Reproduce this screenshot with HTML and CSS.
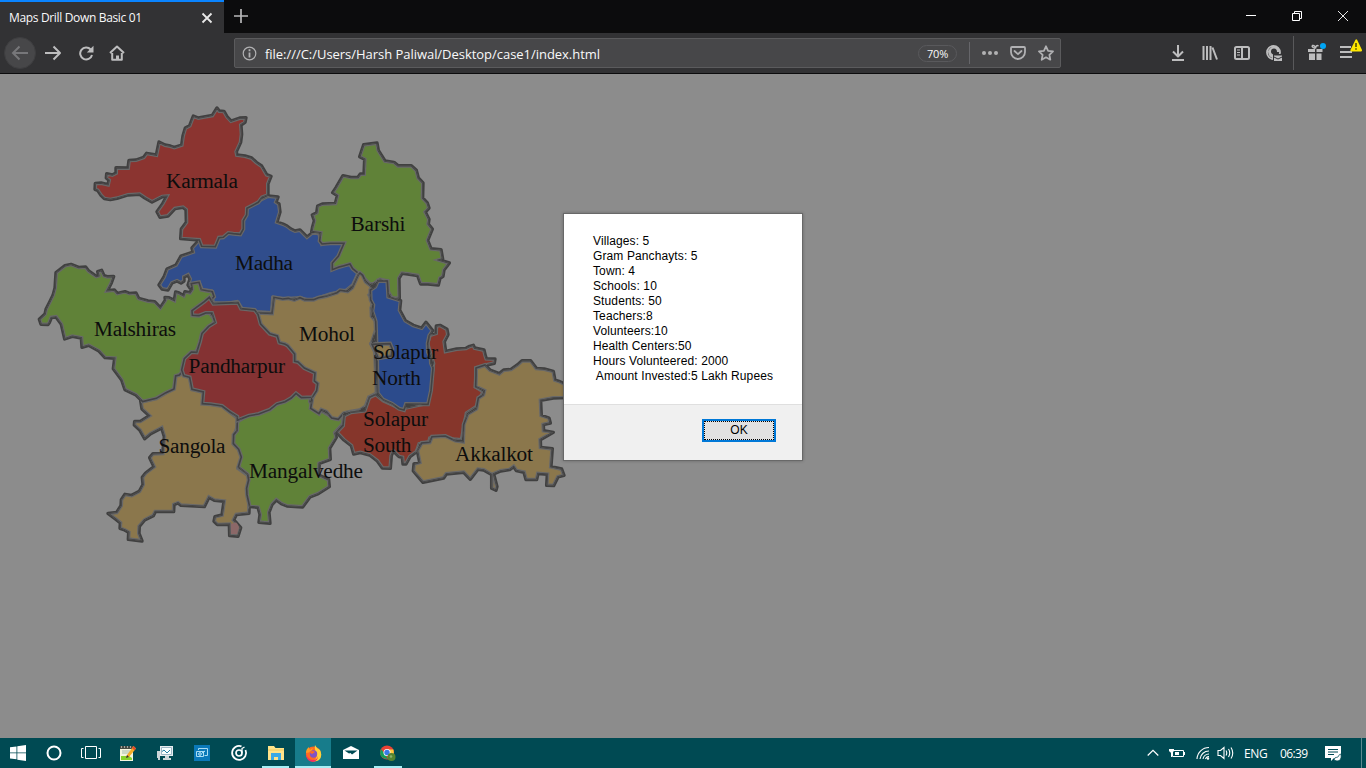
FILE: index.html
```html
<!DOCTYPE html>
<html lang="en">
<head>
<meta charset="utf-8">
<title>Maps Drill Down Basic 01</title>
<link rel="stylesheet" href="styles.css">
</head>
<body>
<div class="screen">
  <header class="tabbar">
    <div class="tab"><span class="tab-title">Maps Drill Down Basic 01</span>
      <svg class="tab-close" width="12" height="12" viewBox="0 0 12 12"><path d="M1.500 1.500l9 9M10.500 1.500l-9 9" stroke="#e8e8e8" stroke-width="1.800"/></svg>
    </div>
    <svg class="newtab" width="16" height="16" viewBox="0 0 16 16"><path d="M8 1v14M1 8h14" stroke="#b8b8b9" stroke-width="1.700"/></svg>
    <div class="wincontrols">
      <svg width="12" height="12" viewBox="0 0 12 12"><path d="M1 5.500h10" stroke="#fff"/></svg>
      <svg width="12" height="12" viewBox="0 0 12 12" fill="none" stroke="#fff"><path d="M1.500 3.500h7v7h-7zM3.500 3.500v-2h7v7h-2"/></svg>
      <svg width="12" height="12" viewBox="0 0 12 12"><path d="M1 1l10 10M11 1L1 11" stroke="#fff" stroke-width=".9"/></svg>
    </div>
  </header>

  <nav class="toolbar">
    <div class="navbuttons">
      <span class="back"><svg width="18" height="16" viewBox="0 0 18 16"><path d="M17 8H2M8.500 1.500L2 8l6.500 6.500" class="dim"/></svg></span>
      <svg width="18" height="16" viewBox="0 0 18 16"><path d="M1 8h14.500M9.500 1.500L16 8l-6.500 6.500" class="ic"/></svg>
      <svg width="16" height="16" viewBox="0 0 16 16"><path d="M12.700 4.500A6 6 0 1 0 14 10" class="ic"/><path d="M15.500.8v6.700H8.800z" fill="#bdbdbe"/></svg>
      <svg width="16" height="16" viewBox="0 0 16 16"><path d="M1 8l7-6.500L15 8M3.200 8v6.800h9.600V8" class="ic"/><path d="M7 15v-4.500h3V15" fill="#bdbdbe"/></svg>
    </div>
    <div class="urlbar">
      <svg width="15" height="15" viewBox="0 0 15 15"><circle cx="7.500" cy="7.500" r="6.300" fill="none" stroke="#b1b1b3" stroke-width="1.200"/><path d="M7.500 6.500v5M7.500 3.200v2" stroke="#b1b1b3" stroke-width="1.800"/></svg>
      <span class="url">file:///C:/Users/Harsh Paliwal/Desktop/case1/index.html</span>
      <span class="zoomlevel">70%</span>
      <span class="sep"></span>
      <div class="urlicons">
        <svg width="18" height="16" viewBox="0 0 18 16" fill="#b1b1b3"><circle cx="3" cy="8" r="2"/><circle cx="9" cy="8" r="2"/><circle cx="15" cy="8" r="2"/></svg>
        <svg width="16" height="16" viewBox="0 0 16 16"><path d="M2 2h12q1 0 1 1v4a7 7 0 0 1-14 0V3q0-1 1-1z" class="uic"/><path d="M4.500 6L8 9.200 11.500 6" class="uic"/></svg>
        <svg width="16" height="16" viewBox="0 0 16 16"><path d="M8 1.300l2.100 4.500 4.900.6-3.600 3.400.9 4.900L8 12.300l-4.300 2.400.9-4.900L1 6.400l4.900-.6z" class="uic"/></svg>
      </div>
    </div>
    <div class="tools">
      <svg width="16" height="18" viewBox="0 0 16 18"><path d="M8 1v11M3 7.500L8 12.500l5-5M2 16h12" class="ic"/></svg>
      <svg width="16" height="16" viewBox="0 0 16 16"><path d="M1.500 1v14M5 1v14M8.500 1v14M10.500 2.500l4.500 12" class="ic"/></svg>
      <svg width="16" height="16" viewBox="0 0 16 16"><rect x="1" y="2" width="14" height="12" rx="1.500" class="ic"/><path d="M8 2v12" class="ic"/><path d="M3 5h3M3 7.500h3M3 10h3" stroke="#bdbdbe"/></svg>
      <svg width="16" height="16" viewBox="0 0 16 16"><circle cx="7.500" cy="7.500" r="6.500" fill="none" stroke="#bdbdbe" stroke-width="1.800"/><path d="M2 6Q5 1 9 1q5 1 5 6h-3q0-3.500-3-3.500T5 6.500q0 2.500 3 3v4Q2 12 2 6z" fill="#bdbdbe"/><path d="M7 9h9v7H7z" fill="#323234"/><path d="M8 10.500h8v1l-4 2-4-2zM8 12.500l4 2 4-2V16H8z" fill="#bdbdbe"/></svg>
    </div>
    <span class="toolsep"></span>
    <svg class="gift" width="20" height="20" viewBox="0 0 20 20"><path d="M1 7h7v3H1zM9.500 7h6v3h-6zM2 11.500h6V18H2zM9.500 11.500h5V18h-5z" fill="#bdbdbe"/><path d="M8.500 6.500Q4 5 5.500 3.500 8 3 8.500 6.500q.5-4 3-2.500" fill="none" stroke="#bdbdbe" stroke-width="1.500"/><circle cx="16" cy="4" r="3" fill="#00a5f5"/></svg>
    <svg class="menu" width="24" height="20" viewBox="0 0 24 20"><path d="M1 8h11M1 13h12M1 18h12" class="ic"/><path d="M16.500.8q.8-1 1.600 0L23 11q.2 1-.8 1.500h-10q-1-.5-.8-1.500z" fill="#ffe900"/><path d="M17 4v4M17 9.300v1.500" stroke="#4a4300" stroke-width="1.500"/></svg>
  </nav>

  <main class="page">
    <svg class="map" width="600" height="480" viewBox="0 74 600 480">
      <defs>
        <path id="madha" d="M201 238L192 248 193 252 181 256 176 265 167 269 164 277 159 285 162 289 168 290 172 283 177 281 181 283 184 281 184 277 188 275 190 279 188 285 190 288 193 284 199 283 202 290 211 291 213 303 226 304 237 302 242 309 256 312 272 313 273 298 285 299 300 298 310 301 331 294 342 292 347 290 353 285 358 274 360 265 348 235 322 244 319 233 312 233 307 237 300 230 295 231 291 229 287 226 283 224 277 222 280 212 279 204 276 202 278 197 268 196 240 210 205 230z"/>
        <path id="sangola" transform="translate(100 370) scale(.3333)" d="M122 92L126 117 148 137 121 154 104 154 103 165 120 181 134 206 152 191 185 174 193 200 188 250 159 251 149 263 162 290 137 309 127 322 129 344 118 364 95 376 75 373 64 389 63 407 50 427 24 430 49 449 61 459 60 475 74 480 86 487 85 508 126 513 117 490 118 469 134 450 160 437 166 425 221 425 222 404 234 399 243 406 313 410 327 382 343 391 372 394 366 435 345 440 342 454 352 464 388 463 389 497 414 499 422 473 410 459 401 450 409 434 447 430 450 320 415 295 430 260 402 200 420 150 370 110 240 -5z"/>
        <path id="mangalvedhe" transform="translate(100 370) scale(.3333)" d="M412 155L411 182 401 194 400 221 416 238 424 261 415 291 443 313 446 330 440 355 441 374 449 410 474 412 480 434 477 457 510 460 507 427 516 404 529 390 544 401 561 408 608 411 630 381 655 371 688 350 686 329 656 315 658 280 691 268 689 235 709 202 705 188 730 160 730 135 700 143 670 125 644 118 630 95 640 60 580 60 510 90z"/>
        <path id="malshiras" transform="translate(30 250) scale(.3333)" d="M78 68L105 47 123 43 146 52 167 51 176 63 199 79 206 77 203 65 215 61 222 77 232 80 251 79 244 99 232 122 253 120 262 130 285 125 298 130 318 129 326 145 354 153 374 155 391 173 406 151 405 142 417 143 433 151 437 126 447 129 461 137 465 125 480 128 487 117 484 101 507 97 514 119 547 125 552 140 525 170 555 210 545 230 470 350 448 375 437 378 432 417 408 428 379 445 338 455 318 435 285 419 275 390 250 356 254 325 225 323 207 303 176 286 156 292 154 264 127 259 104 267 94 223 78 201 64 203 58 218 54 224 33 223 28 208 45 192 48 178 58 158 69 136 75 114z"/>
        <path id="karmala" transform="translate(85 95) scale(.3333)" d="M31 265L48 264 69 269 72 256 64 249 65 236 82 240 93 234 93 218 129 219 132 196 153 195 176 187 185 175 214 180 222 141 240 150 256 153 268 157 290 150 294 122 301 99 314 92 325 63 340 69 382 61 396 39 403 48 417 49 426 65 438 78 464 69 483 68 480 82 468 90 470 118 467 142 454 170 456 180 480 183 500 189 514 202 530 213 545 239 558 244 549 267 549 300 531 307 520 322 486 340 485 360 475 377 475 402 466 418 445 416 430 414 415 427 402 428 391 455 350 454 343 435 287 431 289 402 304 382 303 344 294 337 270 341 249 363 225 367 216 350 233 326 245 304 232 305 201 321 180 309 164 298 129 300 96 310 76 314 58 311 48 301 38 286 30 283z"/>
        <path id="barshi" transform="translate(300 130) scale(.3333)" d="M35 305L38 290 43 272 37 255 50 248 53 228 67 222 106 220 112 197 98 188 108 173 129 137 153 142 174 142 181 132 192 132 194 88 179 80 191 44 231 39 235 61 255 93 282 97 294 107 334 107 349 121 355 144 369 159 368 204 382 219 387 234 376 246 387 268 385 282 397 297 383 331 393 356 423 359 428 387 418 390 448 399 432 420 429 439 420 445 415 465 384 462 362 462 353 437 323 432 306 430 297 445 298 505 276 505 264 485 262 454 240 448 218 464 207 460 190 443 169 425 158 416 150 402 132 407 117 411 97 419 97 399 115 379 132 340 92 340 66 342 59 333 62 309z"/>
        <path id="mohol" transform="translate(180 270) scale(.3333)" d="M232 128L276 130 282 82 308 87 325 85 343 90 360 83 374 89 401 89 415 83 440 78 471 68 480 61 503 64 517 53 535 14 540 9 548 16 557 35 573 48 577 65 568 75 580 95 574 114 575 139 587 153 588 180 574 222 585 240 590 370 567 382 557 409 538 421 507 426 491 430 475 448 455 444 439 425 424 419 417 431 392 415 397 385 411 352 300 250 235 160z"/>
        <path id="pandharpur" transform="translate(180 270) scale(.3333)" d="M100 101L88 82 73 95 36 122 37 136 57 137 77 129 96 129 105 157 86 169 66 190 60 215 50 247 34 246 13 266 5 300 11 317 29 322 36 358 70 366 67 401 92 403 126 408 150 426 172 440 172 451 207 437 236 432 270 419 291 402 315 395 334 384 348 370 364 383 397 382 410 362 413 341 403 333 405 309 373 294 354 276 344 274 344 252 323 227 314 222 298 218 292 198 269 191 242 162 234 133 224 120 183 116 174 98z"/>
        <path id="south" transform="translate(330 270) scale(.3333)" d="M20 487L39 467 42 437 63 427 104 422 118 382 137 373 160 392 200 410 220 415 290 400 300 350 310 280 292 220 300 195 318 190 319 168 330 166 351 178 354 194 343 215 347 244 380 237 408 235 419 229 430 226 434 234 462 240 466 257 469 266 495 267 493 280 470 285 440 295 437 350 460 365 440 410 410 430 395 510 370 508 335 502 300 505 297 517 268 522 260 545 240 560 228 582 219 582 217 562 207 560 190 543 184 557 181 595 157 594 142 573 119 555 91 548 71 552 64 527 42 510z"/>
        <path id="north" transform="translate(330 270) scale(.3333)" d="M121 60L136 50 144 32 172 33 175 80 212 92 209 120 226 152 250 166 275 174 288 157 308 182 298 197 293 220 294 247 302 264 303 280 309 294 303 362 294 403 228 402 222 420 207 416 186 401 159 389 143 369 141 258 124 222 139 213 137 154 127 123 130 105 122 90z"/>
        <path id="enclave" transform="translate(330 270) scale(.3333)" d="M126 223L180 221 187 237 184 258 145 265z"/>
        <path id="akkalkot" transform="translate(330 270) scale(.3333)" d="M438 294L465 285 480 300 508 311 521 300 543 298 563 284 576 272 602 272 619 295 643 297 670 304 675 330 690 335 710 345 710 383 670 384 632 391 634 436 657 444 661 459 640 464 641 482 670 487 631 509 632 532 667 536 663 590 695 597 702 616 684 621 671 647 650 646 652 613 624 611 620 629 588 629 582 607 559 602 551 590 539 599 512 603 491 612 501 650 498 661 485 655 485 614 461 600 444 598 421 628 401 607 349 612 341 624 279 637 250 603 252 582 269 577 262 542 275 519 299 517 306 500 346 498 376 512 399 515 401 464 413 432 439 416 445 384 460 374 463 362 437 350 438 318z"/>
        <g id="outline"><use href="#madha"/><use href="#sangola"/><use href="#mangalvedhe"/><use href="#malshiras"/><use href="#karmala"/><use href="#barshi"/><use href="#mohol"/><use href="#pandharpur"/><use href="#south"/><use href="#north"/><use href="#akkalkot"/></g>
        <clipPath id="land"><use href="#madha"/><use href="#sangola"/><use href="#mangalvedhe"/><use href="#malshiras"/><use href="#karmala"/><use href="#barshi"/><use href="#mohol"/><use href="#pandharpur"/><use href="#south"/><use href="#north"/><use href="#akkalkot"/></clipPath>
      </defs>
      <use href="#outline" class="coast"/>
      <g clip-path="url(#land)">
        <g class="blue"><use href="#madha" class="edge"/><use href="#madha" class="line"/></g>
        <g class="tan"><use href="#sangola" class="edge"/><use href="#sangola" class="line"/></g>
        <g class="green"><use href="#mangalvedhe" class="edge"/><use href="#mangalvedhe" class="line"/></g>
        <g class="green"><use href="#malshiras" class="edge"/><use href="#malshiras" class="line"/></g>
        <g class="red"><use href="#karmala" class="edge"/><use href="#karmala" class="line"/></g>
        <g class="green"><use href="#barshi" class="edge"/><use href="#barshi" class="line"/></g>
        <g class="tan"><use href="#mohol" class="edge"/><use href="#mohol" class="line"/></g>
        <g class="crimson"><use href="#pandharpur" class="edge"/><use href="#pandharpur" class="line"/></g>
        <g class="brick"><use href="#south" class="edge"/><use href="#south" class="line"/></g>
        <g class="navy"><use href="#north" class="edge"/><use href="#north" class="line"/></g>
        <g class="tan"><use href="#enclave" class="edge"/><use href="#enclave" class="line"/></g>
        <g class="tan"><use href="#akkalkot" class="edge"/><use href="#akkalkot" class="line"/></g>
        <path d="M231 524l6-2 2 5-2 7h-6z" fill="#8b6868"/>
      </g>
      <g class="names">
        <text x="166" y="188" textLength="72">Karmala</text>
        <text x="350.500" y="231" textLength="55">Barshi</text>
        <text x="235" y="270" textLength="58">Madha</text>
        <text x="94" y="336" textLength="82">Malshiras</text>
        <text x="299" y="341" textLength="56">Mohol</text>
        <text x="188.500" y="373" textLength="96.500">Pandharpur</text>
        <text x="373" y="359" textLength="65">Solapur</text>
        <text x="372" y="385" textLength="49">North</text>
        <text x="363" y="426" textLength="65">Solapur</text>
        <text x="363" y="452" textLength="48.500">South</text>
        <text x="158.500" y="453" textLength="67">Sangola</text>
        <text x="249" y="478" textLength="114">Mangalvedhe</text>
        <text x="455" y="461" textLength="78">Akkalkot</text>
      </g>
    </svg>
    <section class="dialog">
      <div class="message">Villages: 5
Gram Panchayts: 5
Town: 4
Schools: 10
Students: 50
Teachers:8
Volunteers:10
Health Centers:50
Hours Volunteered: 2000
 Amount Invested:5 Lakh Rupees</div>
      <div class="actions"><button class="ok">OK</button></div>
    </section>
  </main>

  <footer class="taskbar">
    <div class="apps">
      <span class="app"><svg width="16" height="16" viewBox="0 0 16 16" fill="#fff"><path d="M0 2.300l6.500-.9v6H0zM7.300 1.300L16 0v7.400H7.300zM0 8.300h6.500v6L0 13.500zM7.300 8.300H16V16l-8.700-1.200z"/></svg></span>
      <span class="app"><svg width="16" height="16" viewBox="0 0 16 16"><circle cx="8" cy="8" r="6.500" fill="none" stroke="#fff" stroke-width="2"/></svg></span>
      <span class="app"><svg width="20" height="16" viewBox="0 0 20 16" fill="none" stroke="#fff"><path d="M4.500 1.500h11v12h-11zM2.500 3.500h-2v9h2M17.500 3.500h2v9h-2"/></svg></span>
      <span class="app"><svg width="17" height="17" viewBox="0 0 17 17"><path d="M1 2h13v14H1z" fill="#f4f5df"/><path d="M1 1h13v3H1z" fill="#454b43"/><path d="M2 2h1M5 2h1M8 2h1M11 2h1" stroke="#fff"/><path d="M3 6h8M3 8h7" stroke="#a6bdb0"/><path d="M2 11h8l3 2v2H2z" fill="#88d22d"/><path d="M14.500 1L17 3.500 10 12l-3 1 1-3z" fill="#f5ad27"/><path d="M14.500 1L17 3.500l-1.500 2L13 3z" fill="#e34c2e"/><path d="M8 10l2 2-3 1z" fill="#333"/></svg></span>
      <span class="app"><svg width="17" height="16" viewBox="0 0 17 16"><path d="M4 1h13v10H4z" fill="#e7edf1"/><path d="M5.500 2.500h10v7h-10z" fill="#f9ffff" stroke="#9db7c5"/><path d="M6 6.500l2-1.500 3 3 3-3" fill="none" stroke="#237ea4"/><path d="M9 11h4v2h2v2H7v-2h2zM1 6h3v7H1zM2 13h2v2H2z" fill="#ccd6d9"/></svg></span>
      <span class="app"><svg width="16" height="16" viewBox="0 0 16 16"><path d="M0 0h16v16H0z" fill="#0a79b9"/><path d="M4.500 5V3.500h9v7h-3M2.500 6.500h7v5h-7z" fill="none" stroke="#a9ddf4"/><circle cx="6" cy="9" r="1.300" fill="none" stroke="#c2edff"/><path d="M8 8l3-2" stroke="#c2edff"/></svg></span>
      <span class="app"><svg width="18" height="18" viewBox="0 0 18 18" fill="none" stroke="#fff"><path d="M11.500 2.300A7 7 0 1 0 15.500 6" stroke-width="1.800"/><circle cx="9" cy="9" r="3" stroke-width="1.700"/><path d="M12 9V4.500l2.500-1.500" stroke-width="1.300"/></svg></span>
      <span class="app open dual"><svg width="16" height="14" viewBox="0 0 16 14"><path d="M0 0h6l1.500 2H16v12H0z" fill="#ffe38a"/><path d="M0 4h16" stroke="#f1cb60"/><path d="M3 7h10v7h-3v-3H6v3H3z" fill="#3ba9e7"/></svg></span>
      <span class="app open active"><svg width="17" height="17" viewBox="0 0 17 17"><circle cx="8.500" cy="9" r="7.600" fill="#ff6a22"/><path d="M1 8Q1 4 4 2q0 2 1 3 2-2 3-2L6 7z" fill="#ff9b23"/><path d="M10 0q1 3 5 5 3 6-1 10-3 2-6 1 4-2 4-7-3-4-2-9z" fill="#ffd13c"/><path d="M1 9q2 6 7 6 4 0 5-4 0 5-5 6Q1 16 1 9z" fill="#f52e60"/><circle cx="8.500" cy="9" r="3.700" fill="#8152c6"/><path d="M4 7q4-2 6 0L7 9z" fill="#ff6a22"/></svg></span>
      <span class="app"><svg width="16" height="14" viewBox="0 0 16 14"><path d="M0 4l8-4 8 4v9H0z" fill="#fff"/><path d="M1.500 4.500h13L9 8.500 7.500 7 6 7.500z" fill="#004b54"/></svg></span>
      <span class="app open chrome"><svg width="16" height="16" viewBox="0 0 16 16"><circle cx="7" cy="7.500" r="7" fill="#e94235"/><path d="M1 4L5 9l3 5Q0 14 0 7.500z" fill="#159c58"/><path d="M8 4.500h5.400q2 7-5.400 10l3-6z" fill="#ffcd40"/><circle cx="7" cy="7.500" r="3.500" fill="#fff"/><circle cx="7" cy="7.500" r="2.700" fill="#397be5"/><circle cx="11.500" cy="12" r="4" fill="#55852f"/><circle cx="11" cy="11.500" r="1.300" fill="#8cb36e"/></svg></span>
    </div>
    <div class="tray">
      <svg width="12" height="8" viewBox="0 0 12 8"><path d="M.7 6.500L6 1.300l5.300 5.200" fill="none" stroke="#fff" stroke-width="1.200"/></svg>
      <svg width="16" height="13" viewBox="0 0 16 13"><path d="M3.500 3.500h11v6h-11z" fill="none" stroke="#fff"/><path d="M6 5h4v3H6zM15 5h1v3h-1z" fill="#fff"/><path d="M1.500 0v2M3.500 0v2M0 2h5v2L3.500 5.500h-2L0 4zM2 5h1v5H2z" fill="#fff"/></svg>
      <svg width="14" height="14" viewBox="0 0 14 14" fill="none" stroke="#fff" stroke-width="1.100"><path d="M1 13A12 12 0 0 1 13 1.500M4 13A9 9 0 0 1 13 5M7 13a6 6 0 0 1 6-5M9.500 13a3.500 3.500 0 0 1 3.500-2.500"/><circle cx="12" cy="12.500" r=".7"/></svg>
      <svg width="18" height="14" viewBox="0 0 18 14" fill="none" stroke="#fff" stroke-width="1.100"><path d="M1 4.500h2.500L7 1.500v11L3.500 9.500H1zM9 4.500q1.500 2.500 0 5M11.500 3q2.500 4 0 8M14 1.500q3.500 5.500 0 11"/></svg>
      <span class="lang">ENG</span>
      <span class="clock">06:39</span>
      <svg width="17" height="17" viewBox="0 0 17 17"><path d="M0 1h16v12H9l-3 3v-3H0z" fill="#fff"/><path d="M3 4.500h10M3 7h10M3 9.500h6" stroke="#004b54"/><path d="M9 15q0-3 4-3 1-3 3-3 1 7-4 7z" fill="#fff" stroke="#004b54" stroke-width=".7"/></svg>
      <span class="showdesk"></span>
    </div>
  </footer>
</div>
</body>
</html>
```

FILE: styles.css
```css
* { box-sizing: border-box; }
body { margin: 0; overflow: hidden; }
svg { display: block; flex: none; }
.screen { width: 1366px; height: 768px; display: flex; flex-direction: column; background: #8c8c8c; font-family: "Open Sans", "Noto Sans", sans-serif; }

.tabbar { height: 33px; flex: none; display: flex; background: #0c0c0d; }
.tab { width: 224px; border-top: 2px solid #0a84ff; background: #323234; color: #f9f9fa; font-size: 12px; display: flex; align-items: center; justify-content: space-between; padding: 0 11px 0 9px; }
.tab-title { white-space: nowrap; letter-spacing: -.34px; }
.newtab { margin: 8px 0 0 9px; }
.wincontrols { margin-left: auto; display: flex; gap: 34px; padding: 10px 17px 0 0; }

.toolbar { height: 41px; flex: none; display: flex; align-items: center; background: #323234; border-bottom: 1px solid #0c0c0d; padding-left: 4px; }
.navbuttons { display: flex; align-items: center; width: 230px; gap: 15.500px; }
.navbuttons .back { width: 32px; height: 32px; margin-right: -7.500px; border-radius: 50%; background: #474749; border: 1px solid #3e3e40; display: flex; align-items: center; justify-content: center; }
.ic { fill: none; stroke: #bdbdbe; stroke-width: 2; stroke-linejoin: round; }
.uic { fill: none; stroke: #b1b1b3; stroke-width: 1.800; stroke-linejoin: round; stroke-linecap: round; }
.dim { fill: none; stroke: #77777a; stroke-width: 2; }
.urlbar { width: 827px; height: 30px; display: flex; align-items: center; padding: 0 6px 0 7px; background: #474749; border: 1px solid #5b5b5d; border-radius: 2px; color: #f9f9fa; }
.url { margin-left: 8px; padding-top: 1px; font-size: 13px; letter-spacing: -.035px; white-space: nowrap; }
.zoomlevel { margin-left: auto; width: 39px; height: 17px; line-height: 15px; border: 1px solid #59595c; border-radius: 9px; text-align: center; font-size: 11px; letter-spacing: -.2px; }
.sep { width: 1px; height: 22px; margin: 0 11px 0 12px; background: #66666a; }
.urlicons { display: flex; align-items: center; gap: 12px; }
.urlicons svg:first-child { margin-right: -1px; }
.tools { display: flex; align-items: center; gap: 16px; margin-left: 109px; }
.toolsep { width: 1px; height: 34px; margin-left: 11px; background: #59595b; }
.gift { margin: -3px 0 0 13px; }
.menu { margin: -8px 0 0 12px; }

.page { flex: 1; position: relative; overflow: hidden; background: #8c8c8c; }
.coast { fill: #404040; stroke: #404040; stroke-width: 3.400px; stroke-linejoin: round; }
.map use, .map defs path { vector-effect: non-scaling-stroke; }
.edge { stroke: #686868; stroke-width: 4px; }
.line { fill: none; stroke: #424244; stroke-width: 1.600px; }
.red { fill: #8b3430; }
.crimson { fill: #843233; }
.brick { fill: #86362b; }
.green { fill: #608238; }
.blue { fill: #304d8c; }
.navy { fill: #2c4b8c; }
.tan { fill: #8b774c; }
.names { font-family: "Liberation Serif", serif; font-size: 21.300px; fill: #0d0d0d; }

.dialog { position: absolute; left: 563px; top: 139px; width: 240px; height: 248px; display: flex; flex-direction: column; border: 1px solid #686868; background: #fff; font-family: "Liberation Sans", sans-serif; font-size: 12px; color: #000; box-shadow: 0 0 3px rgba(0,0,0,.25); }
.message { height: 191px; padding: 20px 0 0 29px; line-height: 15px; white-space: pre; letter-spacing: .11px; border-bottom: 1px solid #dfdfdf; }
.actions { flex: 1; display: flex; justify-content: flex-end; padding: 14px 26px 0 0; background: #f0f0f0; }
.ok { width: 74px; height: 23px; padding: 0 0 2px; background: #e1e1e1; border: 2px solid #0078d7; outline: 1px dotted #000; outline-offset: -3px; font: 12px "Liberation Sans", sans-serif; color: #000; }

.taskbar { height: 30px; flex: none; display: flex; justify-content: space-between; background: #004a53; color: #fff; }
.apps { display: flex; }
.app { width: 37px; display: flex; align-items: center; justify-content: center; }
.app:first-child, .app:nth-child(2) { width: 36px; }
.open { border-bottom: 2px solid #a5eff5; padding-top: 2px; width: 28px; margin: 0 5px 0 4px; }
.dual { width: 27px; margin: 0 6px 0 5px; }
.active { background: #177c8b; width: 36px; margin: 0 1px 0 0; }
.chrome { margin-left: 5px; }
.tray { display: flex; align-items: center; font-size: 12px; }
.tray svg:first-child { margin-right: 4px; }
.tray svg:nth-child(2) { margin-left: 6px; }
.tray svg:nth-child(3) { margin-left: 11px; }
.tray svg:nth-child(4) { margin-left: 7px; }
.lang { width: 23px; margin-left: 9px; letter-spacing: -.4px; }
.clock { width: 28px; margin: 0 17px 0 13px; letter-spacing: -.6px; }
.showdesk { width: 5px; height: 30px; margin-left: 19px; border-left: 1px solid #5c898f; }
```
